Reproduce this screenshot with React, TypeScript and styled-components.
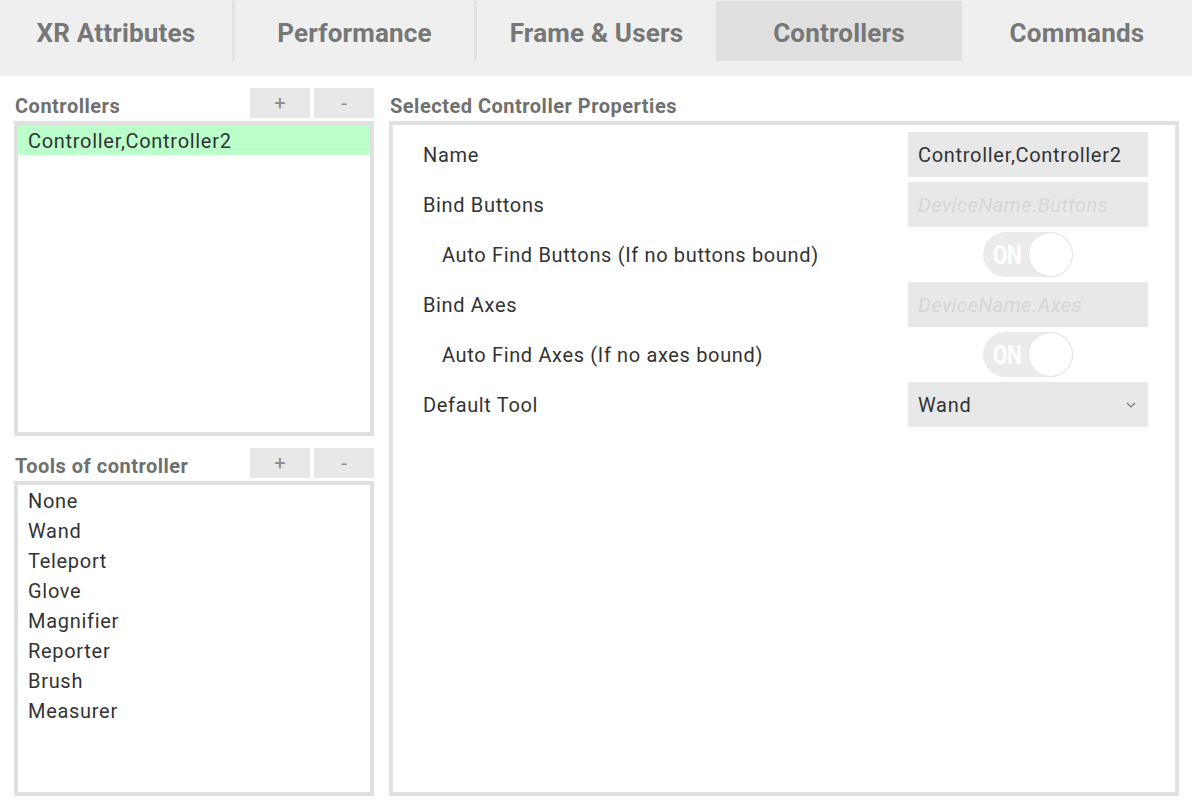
import styled, { createGlobalStyle } from 'styled-components'

const GlobalStyle = createGlobalStyle`
    html, body {
        margin: 0;
        padding: 0;
        background: #ffffff;
        font-family: Roboto, 'Liberation Sans', sans-serif;
    }
    * {
        box-sizing: border-box;
    }
`

const Page = styled.div`
    width: 1192px;
    height: 808px;
    overflow: hidden;
    background: #ffffff;
`

const TabBar = styled.div`
    display: flex;
    height: 76px;
    padding-top: 1px;
    background: #efefef;
`

const Tab = styled.div<{ selected?: boolean; width?: number }>`
    flex: ${props => (props.width ? `0 0 ${props.width}px` : '1')};
    height: 60px;
    display: flex;
    align-items: center;
    justify-content: center;
    padding-top: 3px;
    background: ${props => (props.selected ? '#e0e0e0' : 'transparent')};
    color: #777777;
    font-size: 26px;
    font-weight: 700;
    letter-spacing: 0.2px;
`

const TabDivider = styled.div`
    width: 3px;
    height: 60px;
    background: #e2e2e2;
`

const Main = styled.div`
    display: grid;
    grid-template-columns: 360px 1fr;
    column-gap: 15px;
    padding: 12px 13px 0 14px;
`

const Column = styled.div`
    display: flex;
    flex-direction: column;
    gap: 12px;
`

const Section = styled.div`
    display: flex;
    flex-direction: column;
    gap: 3px;
`

const Header = styled.div`
    display: flex;
    align-items: center;
    height: 30px;
    gap: 4px;
`

const Label = styled.span`
    flex: 1;
    font-size: 20px;
    font-weight: 700;
    color: #707070;
    padding-left: 1px;
    padding-top: 5px;
    letter-spacing: 0.5px;
`

const SmallButton = styled.div`
    width: 60px;
    height: 30px;
    display: flex;
    align-items: center;
    justify-content: center;
    background: #e8e8e8;
    color: #8a8a8a;
    font-size: 20px;
`

const ListBox = styled.div<{ height: number }>`
    height: ${props => props.height}px;
    border: 4px solid #e0e0e0;
    background: #ffffff;
    display: flex;
    flex-direction: column;
`

const ListItem = styled.div<{ selected?: boolean }>`
    height: 30px;
    display: flex;
    align-items: center;
    padding-left: 10px;
    padding-top: 1px;
    font-size: 20px;
    letter-spacing: 0.7px;
    color: #333333;
    background: ${props => (props.selected ? '#bbffcb' : 'transparent')};
`

const PropsPanel = styled.div`
    flex: 1;
    height: 675px;
    border: 4px solid #e0e0e0;
    padding: 7px 27px 0 30px;
    display: flex;
    flex-direction: column;
    gap: 5px;
`

const Row = styled.div`
    height: 45px;
    display: flex;
    align-items: center;
    justify-content: space-between;
`

const RowLabel = styled.span<{ indent?: boolean }>`
    font-size: 20px;
    letter-spacing: 0.65px;
    color: #333333;
    padding-top: 1px;
    padding-left: ${props => (props.indent ? '19px' : '0')};
`

const Field = styled.div<{ placeholder?: boolean }>`
    width: 240px;
    height: 45px;
    background: #e8e8e8;
    display: flex;
    align-items: center;
    justify-content: space-between;
    padding: 1px 12px 0 10px;
    font-size: 20px;
    letter-spacing: ${props => (props.placeholder ? '0.5px' : '0.7px')};
    color: ${props => (props.placeholder ? '#d6d6d6' : '#333333')};
    font-style: ${props => (props.placeholder ? 'italic' : 'normal')};
`

const ToggleSlot = styled.div`
    width: 240px;
    display: flex;
    justify-content: center;
`

const Toggle = styled.div`
    width: 90px;
    height: 45px;
    border-radius: 23px;
    background: #ebebeb;
    display: flex;
    align-items: center;
    justify-content: space-between;
    padding-left: 10px;
`

const ToggleText = styled.span`
    color: #ffffff;
    font-size: 26px;
    font-weight: 700;
    letter-spacing: -0.5px;
    transform: scaleX(0.8);
    transform-origin: left center;
`

const Knob = styled.div`
    width: 45px;
    height: 45px;
    border-radius: 50%;
    background: #ffffff;
    border: 1px solid #e4e4e4;
`

const tools = ['None', 'Wand', 'Teleport', 'Glove', 'Magnifier', 'Reporter', 'Brush', 'Measurer']

function Chevron() {
    return (
        <svg width="10" height="6" viewBox="0 0 10 6">
            <path d="M1 1 L5 5 L9 1" fill="none" stroke="#777777" strokeWidth="1.2" />
        </svg>
    )
}

function OnToggle() {
    return (
        <ToggleSlot>
            <Toggle>
                <ToggleText>ON</ToggleText>
                <Knob />
            </Toggle>
        </ToggleSlot>
    )
}

export default function App() {
    return (
        <Page>
            <GlobalStyle />
            <TabBar>
                <Tab width={232}>XR Attributes</Tab>
                <TabDivider />
                <Tab width={239}>Performance</Tab>
                <TabDivider />
                <Tab width={239}>Frame &amp; Users</Tab>
                <Tab width={246} selected>
                    Controllers
                </Tab>
                <Tab>Commands</Tab>
            </TabBar>
            <Main>
                <Column>
                    <Section>
                        <Header>
                            <Label>Controllers</Label>
                            <SmallButton>+</SmallButton>
                            <SmallButton>-</SmallButton>
                        </Header>
                        <ListBox height={315}>
                            <ListItem selected>Controller,Controller2</ListItem>
                        </ListBox>
                    </Section>
                    <Section>
                        <Header>
                            <Label>Tools of controller</Label>
                            <SmallButton>+</SmallButton>
                            <SmallButton>-</SmallButton>
                        </Header>
                        <ListBox height={315}>
                            {tools.map(t => (
                                <ListItem key={t}>{t}</ListItem>
                            ))}
                        </ListBox>
                    </Section>
                </Column>
                <Section>
                    <Header>
                        <Label>Selected Controller Properties</Label>
                    </Header>
                    <PropsPanel>
                        <Row>
                            <RowLabel>Name</RowLabel>
                            <Field>Controller,Controller2</Field>
                        </Row>
                        <Row>
                            <RowLabel>Bind Buttons</RowLabel>
                            <Field placeholder>DeviceName.Buttons</Field>
                        </Row>
                        <Row>
                            <RowLabel indent>Auto Find Buttons (If no buttons bound)</RowLabel>
                            <OnToggle />
                        </Row>
                        <Row>
                            <RowLabel>Bind Axes</RowLabel>
                            <Field placeholder>DeviceName.Axes</Field>
                        </Row>
                        <Row>
                            <RowLabel indent>Auto Find Axes (If no axes bound)</RowLabel>
                            <OnToggle />
                        </Row>
                        <Row>
                            <RowLabel>Default Tool</RowLabel>
                            <Field>
                                Wand
                                <Chevron />
                            </Field>
                        </Row>
                    </PropsPanel>
                </Section>
            </Main>
        </Page>
    )
}
